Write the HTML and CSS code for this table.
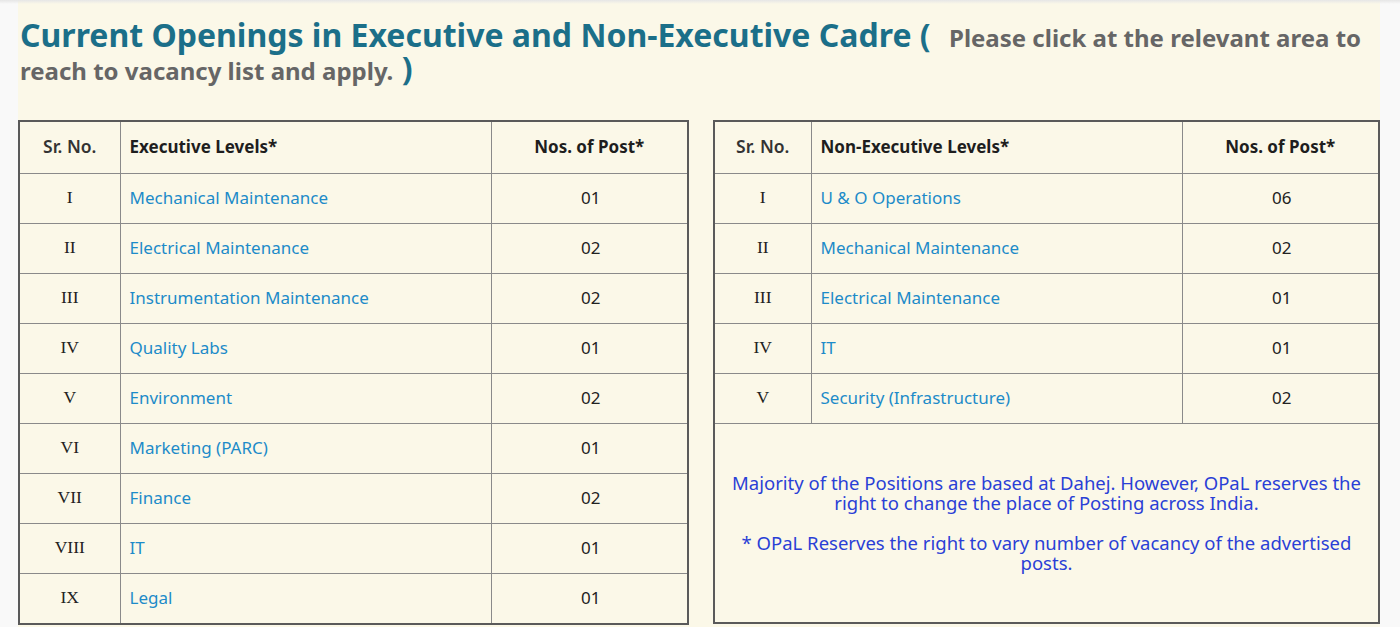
FILE: index.html
```html
<!DOCTYPE html>
<html lang="en">
<head>
<meta charset="utf-8">
<title>Current Openings</title>
<link rel="stylesheet" href="styles.css">
</head>
<body>
<div class="topbar"></div>
<div class="panel">
  <h1 class="title">Current Openings in Executive and Non-Executive Cadre ( <span class="hint">Please click at the relevant area to reach to vacancy list and apply.</span> )</h1>
  <div class="tables">
    <table class="grid left">
      <colgroup><col class="c-sr"><col class="c-name"><col class="c-num"></colgroup>
      <tr class="head"><th class="sr">Sr. No.</th><th class="name">Executive Levels*</th><th>Nos. of Post*</th></tr>
      <tr><td class="sr">I</td><td class="name"><a href="#">Mechanical Maintenance</a></td><td class="num">01</td></tr>
      <tr><td class="sr">II</td><td class="name"><a href="#">Electrical Maintenance</a></td><td class="num">02</td></tr>
      <tr><td class="sr">III</td><td class="name"><a href="#">Instrumentation Maintenance</a></td><td class="num">02</td></tr>
      <tr><td class="sr">IV</td><td class="name"><a href="#">Quality Labs</a></td><td class="num">01</td></tr>
      <tr><td class="sr">V</td><td class="name"><a href="#">Environment</a></td><td class="num">02</td></tr>
      <tr><td class="sr">VI</td><td class="name"><a href="#">Marketing (PARC)</a></td><td class="num">01</td></tr>
      <tr><td class="sr">VII</td><td class="name"><a href="#">Finance</a></td><td class="num">02</td></tr>
      <tr><td class="sr">VIII</td><td class="name"><a href="#">IT</a></td><td class="num">01</td></tr>
      <tr><td class="sr">IX</td><td class="name"><a href="#">Legal</a></td><td class="num">01</td></tr>
    </table>
    <table class="grid right">
      <colgroup><col class="c-sr2"><col class="c-name"><col class="c-num"></colgroup>
      <tr class="head"><th class="sr">Sr. No.</th><th class="name">Non-Executive Levels*</th><th>Nos. of Post*</th></tr>
      <tr><td class="sr">I</td><td class="name"><a href="#">U &amp; O Operations</a></td><td class="num">06</td></tr>
      <tr><td class="sr">II</td><td class="name"><a href="#">Mechanical Maintenance</a></td><td class="num">02</td></tr>
      <tr><td class="sr">III</td><td class="name"><a href="#">Electrical Maintenance</a></td><td class="num">01</td></tr>
      <tr><td class="sr">IV</td><td class="name"><a href="#">IT</a></td><td class="num">01</td></tr>
      <tr><td class="sr">V</td><td class="name"><a href="#">Security (Infrastructure)</a></td><td class="num">02</td></tr>
      <tr class="note-row"><td colspan="3" class="note">
        <p>Majority of the Positions are based at Dahej. However, OPaL reserves the right to change the place of Posting across India.</p>
        <p>* OPaL Reserves the right to vary number of vacancy of the advertised posts.</p>
      </td></tr>
    </table>
  </div>
</div>
</body>
</html>
```
FILE: styles.css
```css
html, body {
  margin: 0;
  padding: 0;
}
body {
  background: #f9f9f9;
  font-family: "Noto Sans", "Open Sans", sans-serif;
  width: 1400px;
  height: 627px;
  overflow: hidden;
  position: relative;
}
.topbar {
  position: absolute;
  left: 0;
  top: 0;
  width: 1400px;
  height: 4px;
  background: linear-gradient(#e6e6e6, rgba(240,240,240,0));
  z-index: 2;
}
.panel {
  margin-left: 18px;
  width: 1362px;
  height: 627px;
  background: #fbf8e8;
  padding-top: 18px;
  box-sizing: border-box;
}
.title {
  margin: 0 0 0 2px;
  padding-right: 14px;
  font-size: 32px;
  line-height: 33px;
  font-weight: 700;
  color: #1b6f89;
}
.hint {
  font-size: 24px;
  font-weight: 700;
  color: #666666;
  margin-left: 10px;
  line-height: 1;
}
.tables {
  display: flex;
  gap: 24px;
  margin-top: 36px;
  align-items: flex-start;
}
.grid {
  border-collapse: collapse;
  border: 2px solid #5a5a5a;
  table-layout: fixed;
}
.left { width: 671px; }
.right { width: 667px; }
.c-sr { width: 101px; }
.c-sr2 { width: 97px; }
.c-name { width: 371px; }
.c-num { width: auto; }
.grid th, .grid td {
  border: 1px solid #8a8a8a;
  padding: 0 0 3px 0;
  height: 46px;
  font-size: 17px;
}
.grid tr.head th {
  height: 48px;
  font-weight: 700;
  color: #1e1e1e;
  text-align: center;
  font-size: 17px;
}
.grid tr.head th.sr {
  font-weight: 600;
  color: #333333;
  font-size: 17.5px;
}
.grid tr.head th.name {
  text-align: left;
  padding-left: 9px;
}
.grid td.sr {
  text-align: center;
  font-family: "Liberation Serif", "DejaVu Serif", serif;
  font-size: 17.5px;
  color: #222222;
}
.grid td.name {
  padding-left: 9px;
}
.grid td.name a {
  color: #1d8bc9;
  text-decoration: none;
}
.grid td.num {
  text-align: center;
  color: #222222;
  padding-left: 3px;
}
.grid td.note {
  height: 198px;
  text-align: center;
  vertical-align: middle;
  color: #2a3fd6;
  font-size: 18.5px;
  line-height: 20px;
  padding: 0 10px;
}
.note p {
  margin: 0;
}
.note p + p {
  margin-top: 20px;
}
```
